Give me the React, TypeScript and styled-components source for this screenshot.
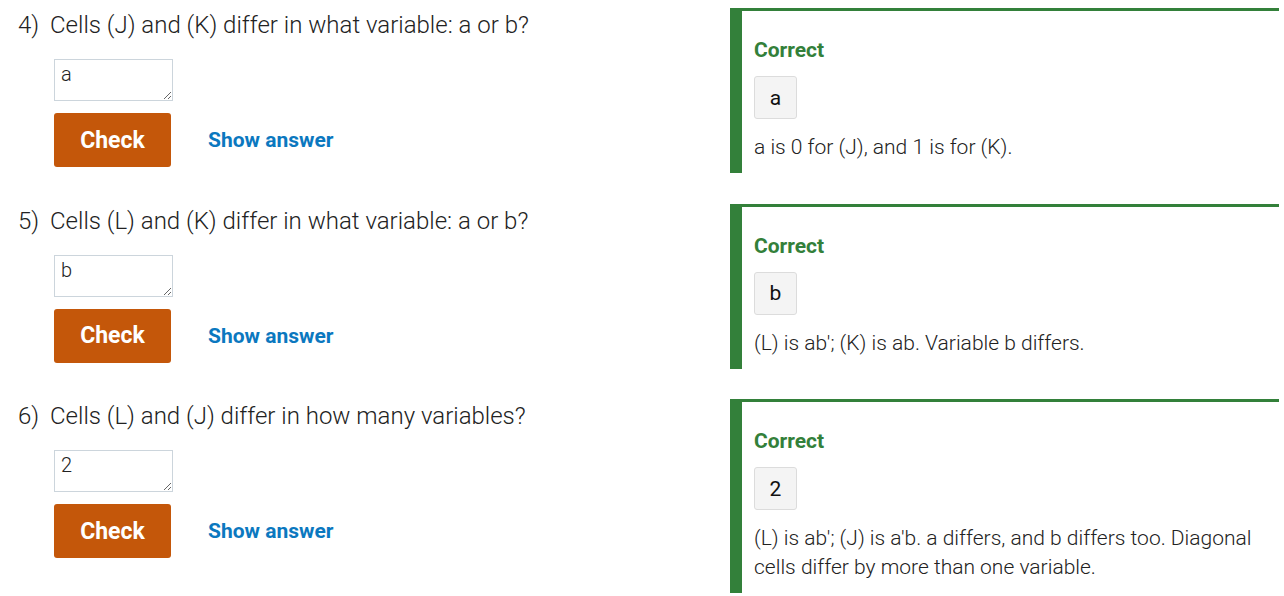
import React from "react";
import styled, { createGlobalStyle } from "styled-components";

const Global = createGlobalStyle`
  html, body { margin: 0; padding: 0; background: #fff; }
  body { font-family: Roboto, "Noto Sans", Arial, sans-serif; color: #222; }
`;

const Page = styled.ol`
  list-style: none;
  margin: 0;
  padding: 8px 5px 0 0;
  display: flex;
  flex-direction: column;
  gap: 30.5px;
`;

const Item = styled.li`
  display: grid;
  grid-template-columns: 730px 1fr;
  align-items: start;
`;

const Question = styled.div`
  display: flex;
  flex-direction: column;
  align-items: flex-start;
`;

const Prompt = styled.div`
  display: flex;
  font-size: 24px;
  font-weight: 300;
  line-height: 34px;
  color: #222;
`;

const Num = styled.span`
  width: 32px;
  padding-left: 18px;
`;

const Answer = styled.textarea`
  margin: 17px 0 0 54px;
  width: 119px;
  height: 42px;
  box-sizing: border-box;
  border: 1px solid #ccd5dc;
  border-radius: 0;
  padding: 2px 6px;
  font-family: Roboto, sans-serif;
  font-size: 20px;
  font-weight: 300;
  color: #222;
  line-height: 24px;
  outline: none;
  resize: both;
`;

const Actions = styled.div`
  display: flex;
  align-items: center;
  gap: 37px;
  margin: 12px 0 0 54px;
`;

const CheckButton = styled.button`
  width: 117px;
  height: 54px;
  border: none;
  border-radius: 3px;
  background: #c4570a;
  color: #fff;
  font-family: Roboto, sans-serif;
  font-weight: 700;
  font-size: 23px;
  cursor: pointer;
`;

const ShowLink = styled.a`
  color: #0b78bf;
  font-weight: 700;
  font-size: 21px;
  text-decoration: none;
  cursor: pointer;
`;

const Feedback = styled.div`
  border-top: 3px solid #33803a;
  border-left: 12px solid #33803a;
  padding: 24px 12px 11px 12px;
`;

const Verdict = styled.div`
  color: #33803a;
  font-weight: 700;
  font-size: 21px;
  line-height: 30px;
`;

const Given = styled.div`
  margin-top: 11px;
  width: 43px;
  height: 43px;
  box-sizing: border-box;
  display: flex;
  align-items: center;
  justify-content: center;
  background: #f4f4f4;
  border: 1px solid #dcdcdc;
  border-radius: 3px;
  font-size: 21px;
  color: #111;
`;

const Explanation = styled.p`
  margin: 14px 0 0;
  font-size: 21px;
  font-weight: 300;
  line-height: 29px;
  color: #222;
`;

const items = [
  {
    n: 4,
    q: "Cells (J) and (K) differ in what variable: a or b?",
    a: "a",
    e: "a is 0 for (J), and 1 is for (K).",
  },
  {
    n: 5,
    q: "Cells (L) and (K) differ in what variable: a or b?",
    a: "b",
    e: "(L) is ab'; (K) is ab. Variable b differs.",
  },
  {
    n: 6,
    q: "Cells (L) and (J) differ in how many variables?",
    a: "2",
    e: "(L) is ab'; (J) is a'b. a differs, and b differs too. Diagonal cells differ by more than one variable.",
  },
];

export default function App() {
  return (
    <>
      <Global />
      <Page>
        {items.map((it) => (
          <Item key={it.n}>
            <Question>
              <Prompt>
                <Num>{it.n})</Num>
                <span>{it.q}</span>
              </Prompt>
              <Answer readOnly defaultValue={it.a} />
              <Actions>
                <CheckButton>Check</CheckButton>
                <ShowLink>Show answer</ShowLink>
              </Actions>
            </Question>
            <Feedback>
              <Verdict>Correct</Verdict>
              <Given>{it.a}</Given>
              <Explanation>{it.e}</Explanation>
            </Feedback>
          </Item>
        ))}
      </Page>
    </>
  );
}
